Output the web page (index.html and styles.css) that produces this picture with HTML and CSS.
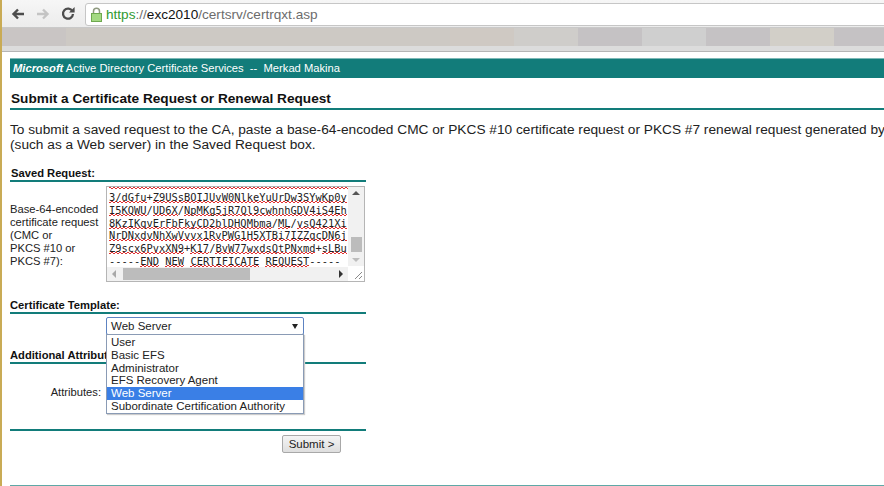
FILE: index.html
```html
<!DOCTYPE html>
<html lang="en">
<head>
<meta charset="utf-8">
<title>Microsoft Active Directory Certificate Services</title>
<link rel="stylesheet" href="styles.css">
</head>
<body>
<div class="toolbar">
  <svg class="nav-icon" viewBox="0 0 14 12" width="14" height="12"><path d="M13 6H3M7 1.5 2.5 6 7 10.5" fill="none" stroke="#4d4d4d" stroke-width="2.4"/></svg>
  <svg class="nav-icon" viewBox="0 0 14 12" width="14" height="12"><path d="M1 6h10M7 1.5 11.5 6 7 10.5" fill="none" stroke="#c4c4c4" stroke-width="2.4"/></svg>
  <svg class="nav-icon" viewBox="0 0 14 14" width="14" height="14"><path d="M11.4 4.2A5 5 0 1 0 12 7" fill="none" stroke="#4d4d4d" stroke-width="2.3"/><path d="M8 5.6h5.6V0z" fill="#4d4d4d"/></svg>
  <div class="omnibox">
    <svg class="lock" viewBox="0 0 11 15" width="11" height="15"><path d="M2.5 7V4.2a3 3 0 0 1 6 0V7" fill="none" stroke="#8f9a80" stroke-width="1.5"/><rect x=".5" y="6.5" width="10" height="8" fill="#a3d982" stroke="#6ea84f"/></svg>
    <span class="url"><span class="scheme">https</span><span class="dim">://</span><span class="host">exc2010</span><span class="dim">/certsrv/certrqxt.asp</span></span>
  </div>
</div>
<div class="bookmarks">
  <div class="blocks">
    <span class="b1"></span><span class="b2"></span><span class="b2"></span><span class="b2"></span><span class="b2"></span><span class="b2"></span><span class="b2"></span><span class="b3"></span><span class="b4"></span><span class="b5"></span><span class="b6"></span><span class="b5"></span><span class="b7"></span><span class="b5"></span>
  </div>
</div>
<main class="page">
  <div class="banner"><em>Microsoft</em> Active Directory Certificate Services &nbsp;-- &nbsp;Merkad Makina</div>
  <h1 class="title">Submit a Certificate Request or Renewal Request</h1>
  <p class="intro">To submit a saved request to the CA, paste a base-64-encoded CMC or PKCS #10 certificate request or PKCS #7 renewal request generated by<br>(such as a Web server) in the Saved Request box.</p>
  <form class="form">
    <h2 class="section first">Saved Request:</h2>
    <div class="row">
      <div class="label">Base-64-encoded certificate request<br>(CMC or<br>PKCS #10 or<br>PKCS #7):</div>
      <div class="textarea">
        <div class="code">
          <div class="squiggle"></div>
          <div><u>3/dGfu</u>+<u>Z9USsBOIJUvW0NlkeYuUrDw3SYwKp0y</u></div>
          <div><u>I5KQWU</u>/<u>UD6X</u>/<u>NpMKg5jR7Ql9cwhnhGDV4iS4Eh</u></div>
          <div><u>8KzIKqvErFbFkyCD2blDHQMbma</u>/<u>ML</u>/<u>vsQ421Xi</u></div>
          <div><u>NrDNxdvNhXwVvvx1RvPWG1H5XTBi7IZZqcDN6j</u></div>
          <div><u>Z9scx6PvxXN9</u>+<u>K17</u>/<u>BvW77wxdsQtPNxmd</u>+<u>sLBu</u></div>
          <div>-----<u>END</u> <u>NEW</u> <u>CERTIFICATE</u> <u>REQUEST</u>-----</div>
        </div>
        <div class="vbar"><span class="up"></span><span class="vthumb"></span><span class="down"></span></div>
        <div class="hbar"><span class="arrow-l"></span><span class="hthumb"></span><span class="arrow-r"></span></div>
        <svg class="grip" viewBox="0 0 9 9" width="9" height="9"><path d="M1 8 8 1M5 8 8 5" stroke="#8a8a8a" fill="none"/></svg>
      </div>
    </div>
    <h2 class="section second">Certificate Template:</h2>
    <div class="template">
      <div class="select">Web Server<span class="caret"></span></div>
      <ul class="options">
        <li>User</li>
        <li>Basic EFS</li>
        <li>Administrator</li>
        <li>EFS Recovery Agent</li>
        <li class="active">Web Server</li>
        <li>Subordinate Certification Authority</li>
      </ul>
    </div>
    <h2 class="section third">Additional Attributes:</h2>
    <div class="row attrs">
      <div class="label right">Attributes:</div>
      <div class="attr-box"></div>
    </div>
    <div class="actions"><button type="button" class="submit">Submit &gt;</button></div>
  </form>
  <div class="foot"></div>
</main>
</body>
</html>
```
FILE: styles.css
```css
* { box-sizing: border-box; }
html, body { margin: 0; padding: 0; }
body {
  width: 884px;
  height: 486px;
  overflow: hidden;
  background: #fff;
  border-left: 2px solid #c9ab55;
  font-family: "Liberation Sans", Arial, sans-serif;
  color: #222;
}
.toolbar {
  height: 27px;
  display: flex;
  align-items: center;
  padding-left: 9px;
  gap: 11px;
  background: linear-gradient(#f6f6f6, #ececec);
}
.nav-icon { flex: none; }
.omnibox {
  flex: 1;
  height: 23px;
  margin-left: -1px;
  margin-right: -8px;
  margin-top: 2px;
  background: #fff;
  border: 1px solid #c6c6c6;
  border-radius: 3px;
  display: flex;
  align-items: center;
  padding-left: 5px;
  gap: 5px;
}
.lock { flex: none; }
.url { font-size: 13.6px; margin-left: -1px; color: #666; }
.scheme { color: #2f9a2f; }
.host { color: #111; }
.dim { color: #6c6c6c; }
.bookmarks {
  height: 25px;
  background: #dcdcdc;
  border-top: 1px solid #c9c9c9;
  border-bottom: 1px solid #b5b5b5;
}
.blocks { display: flex; height: 18px; }
.blocks span { flex: none; width: 64px; height: 18px; }
.blocks .b1 { background: #c9c5c4; }
.blocks .b2 { background: #cdc9c4; }
.blocks .b3 { background: #cfc9c3; }
.blocks .b4 { background: #cfcdca; }
.blocks .b5 { background: #c5c2c4; }
.blocks .b6 { background: #cfcfcf; }
.blocks .b7 { background: #d2cfc8; }
.page { padding: 6px 0 0 8px; }
.banner {
  height: 20px;
  width: 874px;
  background: #127c7a;
  border-top: 1px solid #7db8b6;
  color: #fff;
  font-size: 11.2px;
  line-height: 18px;
  padding-left: 3px;
  white-space: nowrap;
}
.banner em { font-weight: bold; }
.title {
  margin: 13px 0 0;
  height: 19px;
  width: 874px;
  padding-left: 1px;
  font-size: 13.65px;
  line-height: 16px;
  font-weight: bold;
  color: #111;
  border-bottom: 2px solid #127c7a;
}
.intro {
  margin: 12px 0 0;
  font-size: 13.7px;
  line-height: 15px;
  white-space: nowrap;
  color: #222;
}
.form { width: 356px; }
.section {
  margin: 0;
  font-size: 11.2px;
  line-height: 14px;
  height: 16px;
  font-weight: bold;
  color: #111;
  border-bottom: 2px solid #127c7a;
  white-space: nowrap;
}
.section.first { margin-top: 14px; padding-left: 1px; }
.section.second { margin-top: 16px; }
.section.third { margin-top: 10px; }
.row { display: grid; grid-template-columns: 96px 259px; }
.row:first-of-type { margin-top: 4px; }
.label { font-size: 11.2px; line-height: 12.9px; padding-top: 17px; color: #222; }
.right { text-align: right; padding: 15px 5px 0 0; }
.textarea {
  position: relative;
  height: 96px;
  border: 1px solid #b5b5b5;
  background: #fff;
  overflow: hidden;
}
.code {
  width: 243px;
  height: 80px;
  overflow: hidden;
  padding-left: 2px;
  font-family: "DejaVu Sans Mono", monospace;
  font-size: 10.4px;
  line-height: 12.8px;
  color: #222;
  white-space: nowrap;
}
.squiggle {
  height: 4px;
  background:
    linear-gradient(90deg, #e03030 50%, transparent 50%) 0 0 / 4px 1px repeat-x,
    linear-gradient(90deg, #e03030 50%, transparent 50%) 2px 1px / 4px 1px repeat-x;
}
.code u {
  text-decoration: none;
  background:
    linear-gradient(90deg, #e03030 50%, transparent 50%) 0 100% / 4px 1px repeat-x,
    linear-gradient(90deg, #e03030 50%, transparent 50%) 2px calc(100% - 1px) / 4px 1px repeat-x;
}
.vbar {
  position: absolute;
  top: 0; right: 0;
  width: 16px;
  height: 79px;
  background: #f1f1f1;
}
.vbar .up, .vbar .down { position: absolute; left: 4px; border: 4px solid transparent; }
.vbar .up { top: 4px; border-top-width: 0; border-bottom-color: #555; }
.vbar .down { bottom: 4px; border-bottom-width: 0; border-top-color: #bdbdbd; }
.vthumb { position: absolute; top: 50px; left: 3px; width: 11px; height: 15px; background: #bcbcbc; }
.hbar {
  position: absolute;
  left: 0; bottom: 0;
  width: 241px;
  height: 14px;
  background: #f1f1f1;
}
.arrow-l, .arrow-r { position: absolute; top: 3px; border: 4px solid transparent; }
.arrow-l { left: 5px; border-left-width: 0; border-right-color: #a8a8a8; }
.arrow-r { right: 5px; border-right-width: 0; border-left-color: #333; }
.hthumb { position: absolute; left: 16px; top: 1px; width: 127px; height: 12px; background: #bcbcbc; }
.grip { position: absolute; right: 1px; bottom: 1px; }
.template { position: relative; height: 21px; margin-top: 3px; margin-left: 96px; }
.select {
  position: relative;
  width: 198px;
  height: 18px;
  border: 1px solid #5d83c2;
  border-radius: 2px;
  background: #fff;
  font-size: 11.5px;
  line-height: 16px;
  padding-left: 4px;
  color: #222;
}
.caret {
  position: absolute;
  right: 5px; top: 6px;
  border: 3.5px solid transparent;
  border-bottom-width: 0;
  border-top: 5px solid #222;
}
.options {
  position: absolute;
  z-index: 2;
  left: 0; top: 17px;
  width: 198px;
  margin: 0;
  padding: 1px 0 0;
  list-style: none;
  background: #fff;
  border: 1px solid #8a9bb5;
  box-shadow: 1px 1px 1px #ccc;
  font-size: 11.5px;
  line-height: 12.8px;
  color: #222;
}
.options li { padding-left: 4px; white-space: nowrap; }
.options .active { background: #3a7fe6; color: #fff; }
.attrs { margin-top: 7px; height: 58px; }
.attr-box { width: 198px; height: 42px; border: 1px solid #b5b5b5; background: #fff; }
.actions {
  border-top: 2px solid #127c7a;
  padding-top: 4px;
  padding-left: 272px;
}
.submit {
  display: block;
  width: 59px;
  height: 18px;
  padding: 0;
  border: 1px solid #a8a8a8;
  border-radius: 2px;
  background: linear-gradient(#f4f4f4, #dedede);
  font-family: "Liberation Sans", Arial, sans-serif;
  font-size: 11.5px;
  color: #222;
}
.foot { margin-top: 32px; width: 874px; border-top: 1px solid #5fa8a6; }
```
